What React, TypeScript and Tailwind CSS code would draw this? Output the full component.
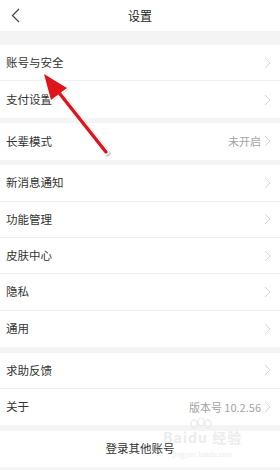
const font = "font-['Noto_Sans_CJK_SC','Noto_Sans',sans-serif]";

type Row = { label: string; value?: string };

const groups: Row[][] = [
  [{ label: "账号与安全" }, { label: "支付设置" }],
  [{ label: "长辈模式", value: "未开启" }],
  [
    { label: "新消息通知" },
    { label: "功能管理" },
    { label: "皮肤中心" },
    { label: "隐私" },
    { label: "通用" },
  ],
  [{ label: "求助反馈" }, { label: "关于", value: "版本号 10.2.56" }],
];

function Chevron() {
  return (
    <svg width="7" height="12" viewBox="0 0 7 12" className="ml-[3px]">
      <path d="M1 1l5 5-5 5" fill="none" stroke="#d4d4d4" strokeWidth="1" />
    </svg>
  );
}

function SettingRow({ row, last }: { row: Row; last: boolean }) {
  return (
    <div
      className={`flex h-[36.4px] items-center justify-between bg-white pl-[6px] pr-[9px] ${
        last ? "" : "border-b border-[#efefef]"
      }`}
    >
      <span className="text-[11.5px] leading-none text-[#333]">{row.label}</span>
      <div className="flex items-center">
        {row.value && (
          <span className="text-[11px] leading-none text-[#a3a3a3]">{row.value}</span>
        )}
        <Chevron />
      </div>
    </div>
  );
}

export default function App() {
  return (
    <div className={`relative h-[470px] w-[280px] overflow-hidden bg-[#f4f4f4] ${font}`}>
      <div className="relative flex h-[31px] items-center justify-center bg-white">
        <svg
          width="9"
          height="15"
          viewBox="0 0 9 15"
          className="absolute left-[11px] top-[8px]"
        >
          <path d="M8 1L1.5 7.5 8 14" fill="none" stroke="#444" strokeWidth="1.2" />
        </svg>
        <span className="text-[12px] leading-none text-[#222]">设置</span>
      </div>

      <div className="mt-[14px] flex flex-col gap-[5.5px]">
        {groups.map((g, gi) => (
          <div key={gi} className="flex flex-col">
            {g.map((r, ri) => (
              <SettingRow key={r.label} row={r} last={ri === g.length - 1} />
            ))}
          </div>
        ))}
        <div className="flex h-[36px] items-center justify-center bg-white">
          <span className="text-[11.5px] leading-none text-[#333]">登录其他账号</span>
        </div>
      </div>

      {/* faint watermark */}
      <svg
        width="30"
        height="26"
        viewBox="0 0 30 26"
        className="pointer-events-none absolute left-[186px] top-[418px]"
      >
        <g fill="none" stroke="#ececec" strokeWidth="1.5">
          <ellipse cx="8" cy="6" rx="3" ry="4" />
          <ellipse cx="15" cy="4" rx="3" ry="4" />
          <ellipse cx="22" cy="6" rx="3" ry="4" />
        </g>
      </svg>
      <div className="pointer-events-none absolute left-[163px] top-[430px] flex flex-col items-center text-[#ececec]">
        <span className="text-[14px] font-bold leading-none tracking-[1px]">Baidu 经验</span>
        <span className="mt-[7px] text-[7px] leading-none">jingyan.baidu.com</span>
      </div>

      {/* red annotation arrow */}
      <svg
        width="280"
        height="470"
        viewBox="0 0 280 470"
        className="pointer-events-none absolute left-0 top-0"
      >
        <g transform="translate(1.5,1.5)" opacity="0.3">
          <path d="M106 152L60 94" stroke="#555" strokeWidth="6" strokeLinecap="round" />
          <path d="M44 74L67 88L51 100Z" fill="#555" />
        </g>
        <path d="M106 152L60 94" stroke="#fff" strokeWidth="6" strokeLinecap="round" />
        <path d="M44 74L67 88L51 100Z" fill="#fff" stroke="#fff" strokeWidth="3" strokeLinejoin="round" />
        <path d="M106 152L60 94" stroke="#e0141b" strokeWidth="3.4" strokeLinecap="round" />
        <path d="M44 74L67 88L51 100Z" fill="#e0141b" />
      </svg>
    </div>
  );
}
